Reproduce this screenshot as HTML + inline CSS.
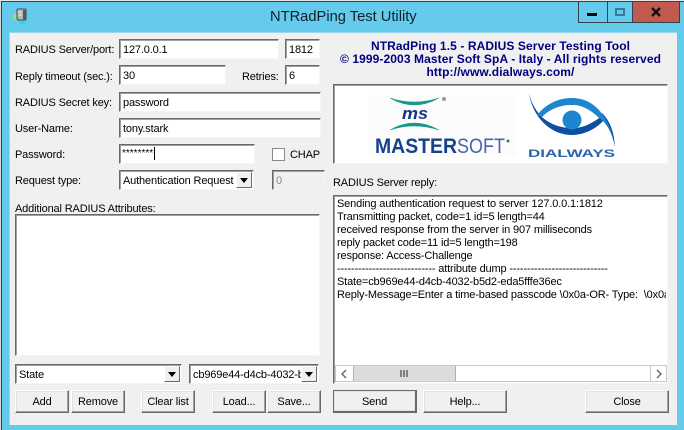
<!DOCTYPE html>
<html><head><meta charset="utf-8"><style>
html,body{margin:0;padding:0;width:684px;height:430px;overflow:hidden;background:#65cbec}
*{box-sizing:border-box}
body{font:11px/14px "Liberation Sans",sans-serif;letter-spacing:-.15px;color:#000;position:relative}
.a{position:absolute;white-space:nowrap}
.s{position:absolute;background:#fff;border:1px solid;border-color:#696969 #f5f5f5 #f5f5f5 #696969;box-shadow:inset 1px 1px 0 #a0a0a0;padding:3px 0 0 3px;white-space:nowrap;overflow:hidden}
.b{position:absolute;background:#f0f0f0;border:1px solid;border-color:#fff #696969 #696969 #fff;box-shadow:inset -1px -1px 0 #a0a0a0,inset 1px 1px 0 #e3e3e3;text-align:center;line-height:22px;top:390px;height:23px}
.ar{position:absolute;top:1px;bottom:1px;right:1px;width:16px;background:#f0f0f0;border:1px solid;border-color:#fff #696969 #696969 #fff}
.ar:after{content:"";position:absolute;left:3px;top:5px;border:4px solid transparent;border-top:5px solid #000;border-bottom:0}
.h{position:absolute;left:333px;width:335px;text-align:center;color:#000080;font-weight:bold;font-size:12px;letter-spacing:.1px;white-space:nowrap}
</style></head><body>
<div class="a" style="left:0;top:0;width:684px;height:1px;background:#e8e8e8"></div>
<div class="a" style="left:0;top:0;width:1px;height:430px;background:#d8d8d8"></div>
<div class="a" style="left:1px;top:1px;width:683px;height:1px;background:#3a3f45"></div>
<div class="a" style="left:1px;top:1px;width:1px;height:429px;background:#3a3f45"></div>

<svg class="a" style="left:10px;top:6px" width="18" height="20" viewBox="0 0 18 20"><path d="M2 10l5-4v10z" fill="#a8e86a" opacity=".7"/><path d="M7 13l9 3-5 3z" fill="#28d8e8"/><rect x="7" y="3" width="9" height="11" rx="1" fill="#b5b5b8" stroke="#44464a"/><rect x="13" y="4" width="3" height="10" fill="#55585c"/><path d="M8 6h4M8 9h4" stroke="#eee"/></svg>
<div class="a" style="left:270px;top:8px;font-size:14.7px;line-height:18px;letter-spacing:0;color:#102028">NTRadPing Test Utility</div>

<div class="a" style="left:578px;top:1px;width:102px;height:22px;background:#65cbec;border:1px solid #35424a"></div>
<div class="a" style="left:607px;top:2px;width:1px;height:20px;background:#35424a"></div>
<div class="a" style="left:632px;top:2px;width:47px;height:20px;background:#c25a50;border-left:1px solid #35424a"></div>
<div class="a" style="left:587px;top:13px;width:10px;height:3px;background:#000"></div>
<div class="a" style="left:615px;top:8px;width:10px;height:8px;border:2px solid #3a7796"></div>
<svg class="a" style="left:650px;top:7px" width="12" height="10" viewBox="0 0 12 10"><path d="M2 1l8 8M10 1L2 9" stroke="#111" stroke-width="2.4"/></svg>

<div class="a" style="left:9px;top:32px;width:668px;height:393px;background:#f0f0f0;border-left:1px solid #9ad7ec;border-top:1px solid #9ad7ec"></div>

<div class="a" style="left:15px;top:43px">RADIUS Server/port:</div>
<div class="a" style="left:15px;top:70px">Reply timeout (sec.):</div>
<div class="a" style="left:242px;top:70px">Retries:</div>
<div class="a" style="left:15px;top:96px">RADIUS Secret key:</div>
<div class="a" style="left:15px;top:122px">User-Name:</div>
<div class="a" style="left:15px;top:148px">Password:</div>
<div class="a" style="left:15px;top:174px">Request type:</div>
<div class="a" style="left:15px;top:202px">Additional RADIUS Attributes:</div>

<div class="s" style="left:119px;top:39px;width:160px;height:20px">127.0.0.1</div>
<div class="s" style="left:285px;top:39px;width:35px;height:20px">1812</div>
<div class="s" style="left:119px;top:65px;width:107px;height:20px">30</div>
<div class="s" style="left:285px;top:65px;width:35px;height:20px">6</div>
<div class="s" style="left:119px;top:92px;width:202px;height:20px">password</div>
<div class="s" style="left:119px;top:118px;width:202px;height:20px">tony.stark</div>
<div class="s" style="left:119px;top:144px;width:136px;height:20px;font-size:10px;line-height:12px;padding-top:3px;padding-left:2px;letter-spacing:0">********</div>
<div class="a" style="left:154px;top:147px;width:1px;height:13px;background:#000"></div>
<div class="a" style="left:272px;top:148px;width:13px;height:13px;background:#fff;border:1px solid #8a8a8a"></div>
<div class="a" style="left:290px;top:148px">CHAP</div>

<div class="s" style="left:119px;top:170px;width:135px;height:20px;">Authentication Request<div class="ar"></div></div>
<div class="s" style="left:272px;top:170px;width:53px;height:20px;background:#f0f0f0;color:#8a8a8a">0</div>

<div class="s" style="left:15px;top:214px;width:305px;height:142px"></div>
<div class="s" style="left:15px;top:364px;width:167px;height:20px">State<div class="ar"></div></div>
<div class="s" style="left:189px;top:364px;width:130px;height:20px;">cb969e44-d4cb-4032-b<div class="ar"></div></div>

<div class="b" style="left:15px;width:54px">Add</div>
<div class="b" style="left:71px;width:54px">Remove</div>
<div class="b" style="left:141px;width:54px">Clear list</div>
<div class="b" style="left:212px;width:54px">Load...</div>
<div class="b" style="left:267px;width:54px">Save...</div>

<div class="h" style="top:39px">NTRadPing 1.5 - RADIUS Server Testing Tool</div>
<div class="h" style="top:52px">© 1999-2003 Master Soft SpA - Italy - All rights reserved</div>
<div class="h" style="top:65px">http://www.dialways.com/</div>

<div class="s" style="left:333px;top:84px;width:335px;height:80px;padding:0">
<svg class="a" style="left:0;top:0" width="333" height="78" viewBox="0 0 333 78">
<rect x="35" y="10" width="148" height="62" fill="#fcfcfc"/>
<path d="M56 13Q80 27 105 13Q80 21 56 13z" fill="#14998c" stroke="#14998c" stroke-width=".5"/>
<circle cx="110" cy="14" r="2" fill="#999"/>
<text x="68" y="34" font-family="Liberation Sans" font-size="17" font-weight="bold" font-style="italic" letter-spacing="0" fill="#16338c" textLength="26" lengthAdjust="spacingAndGlyphs">ms</text>
<path d="M56 45Q80 31 105 45Q80 37 56 45z" fill="#14998c" stroke="#14998c" stroke-width=".5"/>
<text x="41" y="68" font-family="Liberation Sans" font-size="21" font-weight="bold" letter-spacing="0" fill="#17418f" textLength="82" lengthAdjust="spacingAndGlyphs">MASTER</text>
<text x="123" y="68" font-family="Liberation Sans" font-size="21" letter-spacing="0" fill="#4a64a8" textLength="48" lengthAdjust="spacingAndGlyphs">SOFT</text>
<circle cx="174" cy="56" r="1.5" fill="#666"/>
<path d="M195 8C198 30 215 50 238 50C252 50 264 42 270 35C275 42 279 52 281 62C280 45 275 35 268 28L265 33C255 40 248 43 238 43C225 43 215 38 208 32C201 25 197 17 195 8z" fill="#0f4fa0"/>
<path d="M203 30C213 18 225 13 238 13C258 13 275 28 281 62C278 45 270 36 265 33C255 24 248 20 238 20C225 20 215 25 208 32z" fill="#1e86cf"/>
<path d="M208 32C215 25 225 20 238 20C248 20 258 26 265 33C255 40 248 43 238 43C225 43 215 38 208 32z" fill="#fff"/>
<circle cx="238" cy="35" r="9.5" fill="#1e86cf"/>
<text x="194" y="72" font-family="Liberation Sans" font-size="11" font-weight="bold" letter-spacing="0" fill="#2a64a8" textLength="87" lengthAdjust="spacingAndGlyphs">DIALWAYS</text>
</svg></div>

<div class="a" style="left:333px;top:176px">RADIUS Server reply:</div>
<div class="s" style="left:333px;top:195px;width:335px;height:189px;padding:0;line-height:13px">
<div class="a" style="left:3px;top:2px;width:329px;overflow:hidden;line-height:13px">Sending authentication request to server 127.0.0.1:1812<br>Transmitting packet, code=1 id=5 length=44<br>received response from the server in 907 milliseconds<br>reply packet code=11 id=5 length=198<br>response: Access-Challenge<br>---------------------------- attribute dump ----------------------------<br>State=cb969e44-d4cb-4032-b5d2-eda5fffe36ec<br>Reply-Message=Enter a time-based passcode \0x0a-OR- Type:&nbsp; \0x0a</div>
<div class="a" style="left:1px;top:169px;width:332px;height:17px;background:#fff;border:1px solid #c8c8c8">
<div class="a" style="left:17px;top:0;width:103px;height:15px;background:#dcdcdc;border:solid #b0b0b0;border-width:0 1px"></div>
<div class="a" style="left:314px;top:0;width:1px;height:15px;background:#c8c8c8"></div>
<svg class="a" style="left:4px;top:3px" width="8" height="10"><path d="M6 1L2 5l4 4" fill="none" stroke="#606060" stroke-width="1.3"/></svg>
<svg class="a" style="left:319px;top:3px" width="8" height="10"><path d="M2 1l4 4-4 4" fill="none" stroke="#606060" stroke-width="1.3"/></svg>
<svg class="a" style="left:64px;top:3px" width="9" height="9"><path d="M1 1v7M4 1v7M7 1v7" stroke="#505050" stroke-width="1.3"/></svg>
</div></div>

<div class="b" style="left:333px;width:84px;border-color:#696969;border-width:1px 2px 2px 1px;box-shadow:inset 1px 1px 0 #e3e3e3,inset -1px -1px 0 #e3e3e3">Send</div>
<div class="b" style="left:423px;width:84px">Help...</div>
<div class="b" style="left:585px;width:84px">Close</div>
</body></html>
